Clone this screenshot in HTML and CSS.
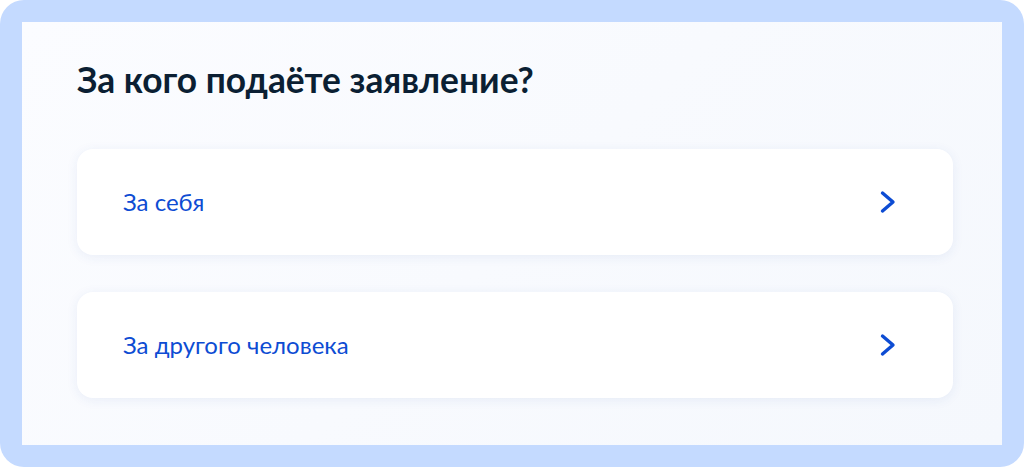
FILE: index.html
```html
<!DOCTYPE html>
<html lang="ru">
<head>
  <meta charset="UTF-8">
  <link rel="stylesheet" href="styles.css">
</head>
<body>
  <div class="frame">
    <div class="screen">
      <h1 class="title">За кого подаёте заявление?</h1>
      <a class="choice" href="#">
        <span class="choice-label">За себя</span>
        <svg class="chevron" width="24" height="24" viewBox="0 0 24 24">
          <path d="M5.5 3 L16 12 L5.5 21" fill="none" stroke="currentColor" stroke-width="3.4" stroke-linecap="round" stroke-linejoin="round"/>
        </svg>
      </a>
      <a class="choice" href="#">
        <span class="choice-label">За другого человека</span>
        <svg class="chevron" width="24" height="24" viewBox="0 0 24 24">
          <path d="M5.5 3 L16 12 L5.5 21" fill="none" stroke="currentColor" stroke-width="3.4" stroke-linecap="round" stroke-linejoin="round"/>
        </svg>
      </a>
    </div>
  </div>
</body>
</html>
```

FILE: styles.css
```css
* {
  margin: 0;
  padding: 0;
  box-sizing: border-box;
}
html, body {
  height: 100%;
  background-color: #fff;
  font-family: Lato, "Noto Sans", sans-serif;
}
.frame {
  height: 467px;
  padding: 22px;
  border-radius: 24px;
  background-color: #c4daff;
}
.screen {
  height: 100%;
  padding: 37px 49px 0 55px;
  background: linear-gradient(135deg, #fbfcff 0%, #f5f8fd 100%);
}
.title {
  font-size: 35.3px;
  font-weight: 700;
  line-height: 42px;
  color: #0b1f33;
  margin-bottom: 48px;
}
/* карточки выбора */
.choice {
  display: flex;
  align-items: center;
  justify-content: space-between;
  height: 106px;
  padding: 0 52px 0 46px;
  margin-bottom: 37px;
  border-radius: 16px;
  background-color: #fff;
  box-shadow: 0 2px 12px rgba(40, 80, 160, 0.08);
  text-decoration: none;
  color: #0d4cd3;
}
.choice-label {
  font-size: 24px;
  line-height: 28px;
}
.chevron {
  display: block;
}
```
